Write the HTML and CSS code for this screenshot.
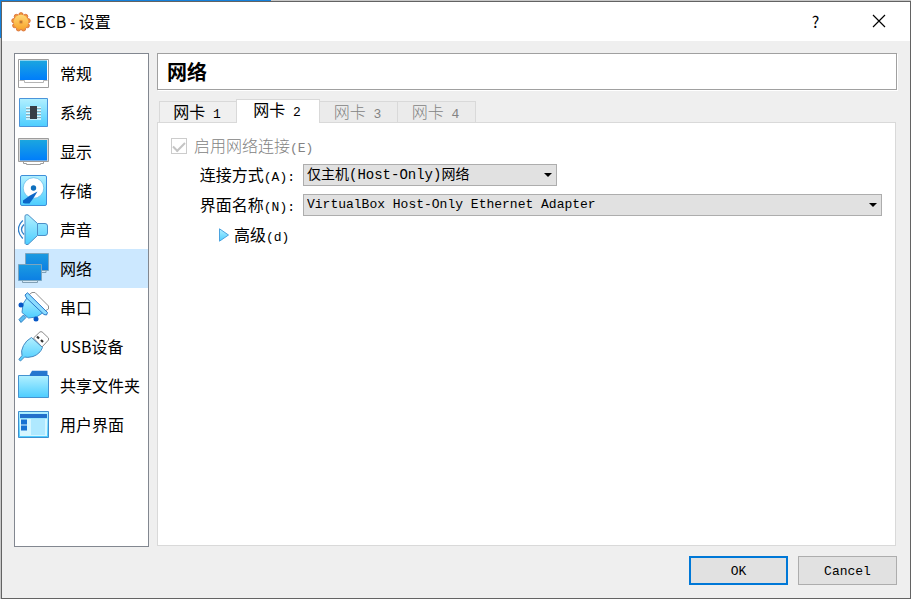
FILE: index.html
```html
<!DOCTYPE html>
<html lang="zh-CN">
<head>
<meta charset="utf-8">
<meta name="viewport" content="width=device-width, initial-scale=1">
<title>ECB - 设置</title>
<link rel="stylesheet" href="styles.css">
</head>
<body>
<svg class="defs" width="0" height="0" aria-hidden="true">
  <defs>
    <linearGradient id="screen" x1="0" y1="0" x2="0" y2="1"><stop offset="0" stop-color="#1ba6df"/><stop offset="1" stop-color="#007dfb"/></linearGradient>
    <linearGradient id="net" x1="0" y1="0" x2="0" y2="1"><stop offset="0" stop-color="#1b9be0"/><stop offset="1" stop-color="#0c7fe4"/></linearGradient>
    <linearGradient id="aqua" x1="0" y1="0" x2="0" y2="1"><stop offset="0" stop-color="#b2f0ff"/><stop offset="1" stop-color="#4ccdff"/></linearGradient>
    <linearGradient id="gear" x1="0" y1="0" x2="0" y2="1"><stop offset="0" stop-color="#ffd978"/><stop offset="1" stop-color="#f8a52c"/></linearGradient>
  </defs>
</svg>
<div class="window">
  <header class="titlebar">
    <svg class="app-icon" width="20" height="20" viewBox="0 0 20 20" aria-hidden="true">
      <g fill="#f0973a" stroke="#d8692f" stroke-width=".8">
        <circle cx="10" cy="2.800" r="2.200"/><circle cx="14.600" cy="4.500" r="2.200"/><circle cx="17.100" cy="8.700" r="2.200"/><circle cx="16.200" cy="13.600" r="2.200"/><circle cx="12.500" cy="16.800" r="2.200"/><circle cx="7.500" cy="16.800" r="2.200"/><circle cx="3.800" cy="13.600" r="2.200"/><circle cx="2.900" cy="8.700" r="2.200"/><circle cx="5.400" cy="4.500" r="2.200"/>
      </g>
      <circle cx="10" cy="10" r="7.300" fill="url(#gear)"/>
      <circle cx="10" cy="10" r="1.700" fill="#b97b35" stroke="#ee9c3c"/>
    </svg>
    <h1>ECB - 设置</h1>
    <button class="caption" type="button" aria-label="帮助">?</button>
    <button class="caption" type="button" aria-label="关闭"><svg width="14" height="14" viewBox="0 0 14 14"><path d="M1 1L13 13M13 1L1 13" stroke="#000" stroke-width="1.200"/></svg></button>
  </header>
  <main class="content">
    <nav class="sidebar">
      <button type="button"><svg viewBox="0 0 32 32"><path d="M.5 1.500H30.500V29.500H.5Z" fill="#fff" stroke="#9d9d9d"/><path d="M2 2.500H29V22H2Z" fill="url(#screen)"/><path d="M1.500 22.500H6.500V24.500H25.500V22.500H29.500" fill="none" stroke="#b4b4b4"/></svg>常规</button>
      <button type="button"><svg viewBox="0 0 32 32"><path d="M1.500 1.500H29.500V29.500H1.500Z" fill="url(#aqua)" stroke="#4b94da"/><path d="M8 10.500H23M8 13.500H23M8 16.500H23M8 19.500H23M8 22H23" stroke="#dff8ff" stroke-width="1.500"/><path d="M8 11.500H23M8 14.500H23M8 17.500H23M8 20.500H23" stroke="#8b9da5" stroke-width=".8"/><path d="M12 9H19V22H12Z" fill="#383d46"/></svg>系统</button>
      <button type="button"><svg viewBox="0 0 32 32"><path d="M5.500 25V27.500H8.500V28.500H22.500V27.500H25.500V25" fill="#fff" stroke="#9d9d9d"/><path d="M.5 2.500H30.500V25.500H.5Z" fill="#d8d8d8" stroke="#9d9d9d"/><path d="M2 4H29V24.500H2Z" fill="url(#screen)"/></svg>显示</button>
      <button type="button"><svg viewBox="0 0 32 32"><rect x="2.500" y=".5" width="26" height="30" rx="1.500" fill="url(#aqua)" stroke="#3f8fd9"/><circle cx="15.500" cy="13" r="10.300" fill="#fff" stroke="#63b9e6" stroke-width=".7"/><circle cx="15.500" cy="13" r="2.700" fill="#0f6fbd"/><path d="M19.500 16.500L12 20.500L5 25.500V28L7 28.500H11.500L15.500 23Z" fill="#0b66c8"/></svg>存储</button>
      <button type="button"><svg viewBox="0 0 32 32"><path d="M7 1.500Q7.500 .5 10 .8L19.500 9.500H27Q29.500 9.500 29.500 12V19Q29.500 21.500 27 21.500H19.500L10 30.500Q7.500 31 7 29.500Z" fill="url(#aqua)" stroke="#4d8fc7"/><path d="M19.500 10V21" stroke="#4d8fc7"/><path d="M4.800 6.500Q-4 15 4.800 24.500M6 10.500Q1 15.500 6 20.500" fill="none" stroke="#2f7fca" stroke-width="1.300"/></svg>声音</button>
      <button class="selected" type="button" aria-current="page"><svg viewBox="0 0 32 32"><path d="M10 17V19.500H28V17" fill="#d5e8f5" stroke="#7f9fb5"/><path d="M7.500 .5H30.500V17.500H7.500Z" fill="url(#net)" stroke="#7ba5bf"/><path d="M4.500 27V29.500H19.500V27" fill="#d5e8f5" stroke="#7f9fb5"/><path d="M.5 11.500H23.500V27.500H.5Z" fill="url(#net)" stroke="#7ba5bf"/></svg>网络</button>
      <button type="button"><svg viewBox="0 0 32 32"><path d="M10 3.500L14 .5H17L30.500 14V17L27 19Z" fill="#fff" stroke="#909090"/><path d="M5.500 23L1 27.500L3 30.500L8 25.500Z" fill="#5bbdf3" stroke="#2f83c7"/><path d="M9.500 5L5 12L4 20.500L10.500 26L18.500 25L26 20Z" fill="url(#aqua)" stroke="#3f91d0"/><path d="M7 3L9.500 .8L29.500 20.500L28.500 23L26 22.500L8.500 6Z" fill="#8cdcff" stroke="#2977c8"/><circle cx="3" cy="13" r="2.500" fill="#0757c6"/><circle cx="18" cy="27" r="2.500" fill="#0757c6"/></svg>串口</button>
      <button type="button"><svg viewBox="0 0 32 32"><path d="M15.500 7L22 .8H24L30.500 7V9L24 16Z" fill="#fff" stroke="#8b8b8b"/><path d="M19 5.500L21 7.500M23 9L25 11" stroke="#333" stroke-width="2.200"/><path d="M13.500 6.500L24.500 16.500Q22 23 15 25.500Q9 27 6.500 26L2.500 30L.8 28.500L4 24.500Q2.500 20 5.500 14.500Q8 9.500 13.500 6.500Z" fill="url(#aqua)" stroke="#468ac3"/></svg>USB设备</button>
      <button type="button"><svg viewBox="0 0 32 32"><path d="M11 6L14 .8H29.500V6Z" fill="#2576cf"/><path d="M.5 5.500H30.500V27.500H.5Z" fill="url(#aqua)" stroke="#4593d1"/><path d="M12 5.500H30.500" stroke="#2576cf"/></svg>共享文件夹</button>
      <button type="button"><svg viewBox="0 0 32 32"><path d="M.5 2.500H30.500V28.500H.5Z" fill="url(#aqua)" stroke="#3f8fcf"/><path d="M2 10H29V27H2Z" fill="#d6f6ff"/><path d="M13 10H27V26H13Z" fill="#afe9ff"/><path d="M2 5H29V9H2Z" fill="#2270cb"/><path d="M3 10.500H9V15.500H3ZM3 16.500H9V21.500H3Z" fill="#1671d2"/></svg>用户界面</button>
    </nav>
    <section class="page">
      <h2>网络</h2>
      <div class="tabs" role="tablist">
        <button type="button" role="tab">网卡<span class="latin"> 1</span></button>
        <button class="active" type="button" role="tab" aria-selected="true">网卡<span class="latin"> 2</span></button>
        <button type="button" role="tab" disabled>网卡<span class="latin"> 3</span></button>
        <button type="button" role="tab" disabled>网卡<span class="latin"> 4</span></button>
      </div>
      <div class="pane" role="tabpanel">
        <div class="enable">
          <input id="enable" type="checkbox" checked disabled>
          <label for="enable">启用网络连接<span class="latin">(E)</span></label>
        </div>
        <div class="fields">
          <label for="attached">连接方式<span class="latin">(A):</span></label>
          <span class="combo short"><select id="attached"><option>仅主机(Host-Only)网络</option></select></span>
          <label for="adapter">界面名称<span class="latin">(N):</span></label>
          <span class="combo"><select id="adapter" class="latin"><option>VirtualBox Host-Only Ethernet Adapter</option></select></span>
        </div>
        <button class="advanced" type="button" aria-expanded="false"><svg width="12" height="14" viewBox="0 0 12 14"><path d="M1.500 .8L10.500 7L1.500 13.200Z" fill="url(#aqua)" stroke="#4ba3df"/></svg><span>高级<span class="latin">(d)</span></span></button>
      </div>
    </section>
  </main>
  <footer class="actions">
    <button class="primary" type="button">OK</button>
    <button type="button">Cancel</button>
  </footer>
</div>
</body>
</html>
```
FILE: styles.css
```css
* {
  box-sizing: border-box;
}

body {
  margin: 0;
  padding: 1px 0 0 1px;
  min-height: 100vh;
  display: flex;
  background:
    linear-gradient(#1481dc, #1481dc) 0 0 / 271px 1px no-repeat,
    linear-gradient(#1481dc, #1481dc) 0 0 / 1px 38px no-repeat,
    #c8c8c8;
  font: 16px/20px "Noto Sans CJK SC", sans-serif;
  color: #000;
}

button,
select,
input {
  margin: 0;
  padding: 0;
  border: 0;
  border-radius: 0;
  font: inherit;
  color: inherit;
}

button {
  background: none;
}

.defs {
  position: absolute;
}

.window {
  flex: 1;
  display: flex;
  flex-direction: column;
  border: 1px solid #636363;
  background: #efefef;
}

.titlebar {
  display: flex;
  align-items: center;
  height: 39px;
  padding-left: 9px;
  background: #fff;
}

.titlebar h1 {
  flex: 1;
  margin: 0 0 0 5px;
  padding-bottom: 2px;
  font-size: 16px;
  font-weight: 400;
}

.caption {
  display: grid;
  place-items: center;
  width: 63px;
  height: 39px;
  padding-bottom: 2px;
}

.content {
  flex: 1;
  display: flex;
  gap: 8px;
  padding: 12px 13px 9px 12px;
}

.sidebar {
  width: 135px;
  border: 1px solid #828790;
  background: #fff;
}

.sidebar button {
  display: flex;
  gap: 10px;
  width: 100%;
  height: 39px;
  padding-left: 3px;
  line-height: 38px;
  white-space: nowrap;
}

.sidebar svg {
  flex: none;
  width: 32px;
  height: 32px;
  margin-top: 4px;
}

.sidebar .selected {
  background: #cce8ff;
}

.page {
  flex: 1;
  display: flex;
  flex-direction: column;
  min-width: 0;
}

.page h2 {
  margin: 0;
  padding: 8px 9px;
  border: 1px solid #a0a0a0;
  background: #fff;
  box-shadow: 1px 1px #fff;
  font-size: 20px;
  line-height: 19px;
}

.latin,
.actions {
  font-family: "Liberation Mono", monospace;
  font-size: 13px;
}

.latin {
  line-height: 16px;
  white-space: pre;
}

.tabs {
  display: flex;
  align-items: flex-end;
  margin: 9px 0 -1px 2px;
}

.tabs button {
  width: 78px;
  height: 22px;
  margin-right: -1px;
  padding: 0 2px 2px 0;
  border: 1px solid #d9d9d9;
  background: #f0f0f0;
  line-height: 18px;
}

.tabs button:disabled {
  width: 79px;
  background: #ebebeb;
  color: #838383;
  font-weight: 300;
}

.tabs .active {
  z-index: 1;
  width: 84px;
  height: 24px;
  border-bottom: 0;
  background: #fff;
}

.pane {
  flex: 1;
  margin: 0 1px 1px 0;
  padding: 12px 13px;
  border: 1px solid #d9d9d9;
  background: #fff;
}

.enable {
  display: flex;
  align-items: center;
  gap: 7px;
  height: 22px;
  color: #838383;
  font-weight: 300;
}

.enable input {
  appearance: none;
  display: grid;
  place-items: center;
  width: 16px;
  height: 16px;
  border: 1px solid #ccc;
}

.enable input:checked::before {
  content: "";
  width: 10px;
  height: 5px;
  border: solid #c4c4c4;
  border-width: 0 0 2px 2px;
  transform: translateY(-1px) rotate(-45deg);
}

.fields {
  display: grid;
  grid-template-columns: 124px 1fr;
  grid-auto-rows: 22px;
  align-items: center;
  gap: 8px;
  margin-top: 7px;
}

.fields label {
  text-align: right;
  white-space: nowrap;
}

.combo {
  display: grid;
  align-items: center;
}

.combo.short {
  width: 254px;
}

.combo select,
.combo::after {
  grid-area: 1 / 1;
}

.combo select {
  appearance: none;
  width: 100%;
  height: 22px;
  padding: 0 24px 0 3px;
  border: 1px solid #adadad;
  background: #e1e1e1;
  font-family: "Liberation Mono", "Noto Sans CJK SC", monospace;
  font-size: 14px;
}

.combo select.latin {
  font-size: 13px;
}

.combo::after {
  content: "";
  justify-self: end;
  width: 8px;
  height: 4px;
  margin-right: 5px;
  background: #000;
  clip-path: polygon(0 0, 100% 0, 50% 100%);
  pointer-events: none;
}

.advanced {
  display: flex;
  align-items: center;
  gap: 4px;
  height: 22px;
  margin: 8px 0 0 47px;
}

.actions {
  display: flex;
  justify-content: flex-end;
  gap: 10px;
  padding: 0 13px 13px;
}

.actions button {
  width: 99px;
  height: 29px;
  padding-top: 2px;
  border: 1px solid #adadad;
  background: #e1e1e1;
}

.actions .primary {
  border: 2px solid #0078d7;
}
```
